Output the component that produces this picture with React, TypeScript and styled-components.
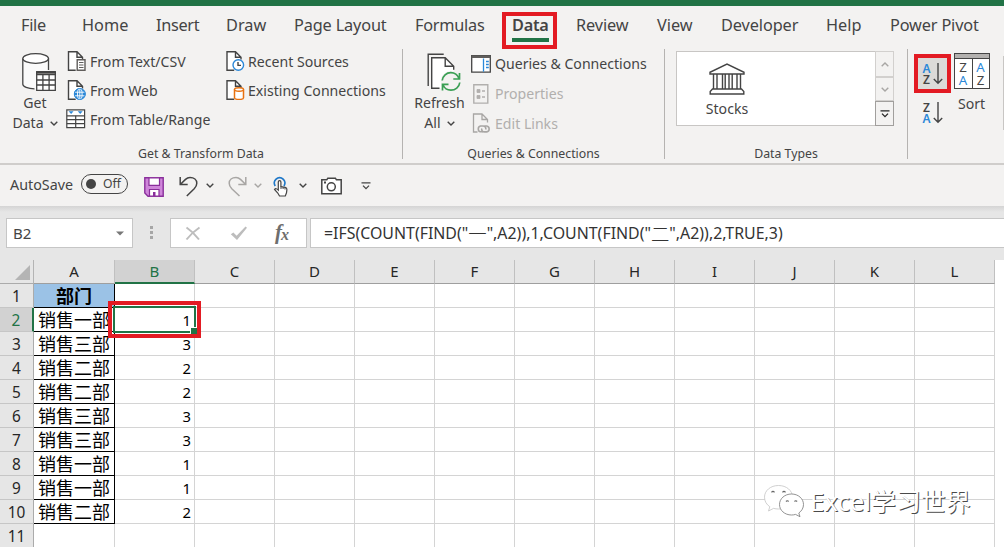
import React from "react";
import styled, { createGlobalStyle, css } from "styled-components";

const UI = `"Noto Sans", "Noto Sans CJK SC", sans-serif`;
const INK = "#444444";
const GREEN = "#217346";
const RED = "#e31b23";
const BLUE = "#2b88d8";

const GlobalStyle = createGlobalStyle`
  * { box-sizing: border-box; }
  body { margin: 0; background: #fff; overflow: hidden; font-family: ${UI}; color: ${INK}; }
  svg { display: block; flex: none; }
`;

const Window = styled.div`
  position: relative;
  display: flex;
  flex-direction: column;
  width: 1004px;
  height: 547px;
  overflow: hidden;
  background: #fff;
`;

const TitleStrip = styled.div`
  flex: none;
  height: 6px;
  background: ${GREEN};
`;

const TabBar = styled.nav`
  flex: none;
  display: grid;
  grid-template-columns: 61px 74px 70px 68px 121px 97px 64px 81px 64px 105px 64px auto;
  height: 42px;
  padding-left: 21px;
  background: #f3f2f1;
`;

const Tab = styled.div<{ $active?: boolean; $ls?: number }>`
  justify-self: start;
  height: 36px;
  font-size: 16.3px;
  line-height: 38px;
  letter-spacing: ${(p) => p.$ls ?? 0}px;
  white-space: nowrap;
  ${(p) =>
    p.$active &&
    css`
      font-weight: 600;
      border-bottom: 4px solid ${GREEN};
    `}
`;

const Ribbon = styled.div`
  flex: none;
  display: flex;
  height: 117px;
  padding-top: 1px;
  background: #f3f2f1;
  border-bottom: 2px solid #cfcdcb;
`;

const Group = styled.section<{ $w: number }>`
  flex: none;
  display: flex;
  flex-direction: column;
  justify-content: space-between;
  width: ${(p) => p.$w}px;
  height: 110px;
  border-right: 1px solid #b5b3b1;
`;

const GroupBody = styled.div`
  display: flex;
  height: 94px;
`;

const Caption = styled.div`
  height: 14px;
  font-size: 12.3px;
  line-height: 18px;
  text-align: center;
`;

const BigButton = styled.div<{ $w: number; $pt?: number; $pl?: number }>`
  flex: none;
  display: flex;
  flex-direction: column;
  align-items: center;
  width: ${(p) => p.$w}px;
  padding-top: ${(p) => p.$pt ?? 2}px;
  padding-left: ${(p) => p.$pl ?? 0}px;
  font-size: 14.1px;
  line-height: 20px;
  white-space: nowrap;
`;

const BigLine = styled.div`
  display: flex;
  align-items: center;
  gap: 6px;
`;

const Commands = styled.div<{ $w?: number; $row: number; $pb: number }>`
  flex: none;
  display: flex;
  flex-direction: column;
  width: ${(p) => (p.$w ? `${p.$w}px` : "auto")};
  & > div {
    height: ${(p) => p.$row}px;
    padding-bottom: ${(p) => p.$pb}px;
  }
`;

const Command = styled.div<{ $disabled?: boolean }>`
  display: flex;
  align-items: center;
  font-size: 14.1px;
  white-space: nowrap;
  color: ${(p) => (p.$disabled ? "#b1afad" : INK)};
`;

const IconSlot = styled.span<{ $w: number }>`
  display: flex;
  width: ${(p) => p.$w}px;
`;

const Gallery = styled.div`
  display: flex;
  width: 218px;
  height: 75px;
  margin: 2px 0 0 11px;
  background: #fff;
  border: 1px solid #c8c6c4;
`;

const GalleryItem = styled.div`
  display: flex;
  flex-direction: column;
  align-items: center;
  width: 100px;
  padding-top: 11px;
  font-size: 14.1px;
  line-height: 20px;
  gap: 4px;
`;

const GalleryScroll = styled.div`
  display: grid;
  grid-template-rows: 26px 24px 25px;
  width: 19px;
  margin: -1px -1px -1px auto;
`;

const ScrollButton = styled.div<{ $dark?: boolean }>`
  display: flex;
  align-items: center;
  justify-content: center;
  background: #f3f2f1;
  border: 1px solid ${(p) => (p.$dark ? "#a19f9d" : "#d2d0ce")};
`;

const SortColumn = styled.div`
  display: flex;
  flex-direction: column;
  width: 43px;
  padding: 5px 0 0 6px;
`;

const SortButton = styled.div<{ $hot?: boolean }>`
  display: flex;
  align-items: center;
  justify-content: center;
  gap: 1px;
  width: 37px;
  height: 39px;
  padding-right: 1px;
  background: ${(p) => (p.$hot ? "#dcdad8" : "transparent")};
  border: ${(p) => (p.$hot ? `4px solid ${RED}` : "none")};
`;

const RibbonEdge = styled.div`
  width: 1px;
  height: 74px;
  margin: 7px 0 0 auto;
  background: #c8c6c4;
`;

const QuickBar = styled.div`
  flex: none;
  display: flex;
  align-items: center;
  height: 41px;
  padding-left: 10px;
  background: #f3f2f1;
  font-size: 14.3px;
`;

const QuickItem = styled.div<{ $w: number; $dy?: number }>`
  flex: none;
  display: flex;
  align-items: center;
  width: ${(p) => p.$w}px;
  padding-top: ${(p) => Math.max(p.$dy ?? 0, 0)}px;
  padding-bottom: ${(p) => Math.max(-(p.$dy ?? 0), 0)}px;
`;

const Toggle = styled.div`
  display: flex;
  align-items: center;
  justify-content: space-between;
  width: 47px;
  height: 20px;
  padding: 0 6px 0 4px;
  border: 1.3px solid ${INK};
  border-radius: 10px;
  font-size: 12.2px;
  line-height: 16px;
`;

const Knob = styled.span`
  width: 10px;
  height: 10px;
  border-radius: 50%;
  background: ${INK};
`;

const FormulaRow = styled.div`
  flex: none;
  display: flex;
  height: 54px;
  padding: 12px 0 0 6px;
  background: linear-gradient(#d4d4d4 0, #e6e6e6 6px);
`;

const Field = styled.div<{ $w: number; $ml?: number }>`
  flex: none;
  display: flex;
  align-items: center;
  width: ${(p) => p.$w}px;
  height: 30px;
  margin-left: ${(p) => p.$ml ?? 0}px;
  background: #fff;
  border: 1px solid #c6c6c6;
  font-size: 15px;
  line-height: 26px;
  white-space: nowrap;
`;

const NameBox = styled(Field)`
  justify-content: space-between;
  padding: 0 8px 0 6px;
`;

const FormulaButtons = styled(Field)`
  padding-left: 14px;
`;

const Formula = styled(Field)`
  padding-left: 13px;
  font-size: 15.9px;
  color: #333;
`;

const Quoted = styled.span`
  font-family: "Noto Sans CJK SC", sans-serif;
  font-size: 18.4px;
  font-weight: 300;
  line-height: 26px;
`;

const Grip = styled.div`
  display: flex;
  flex-direction: column;
  gap: 2px;
  width: 3px;
  margin: 8px 0 0 17px;
`;

const Dot = styled.i`
  width: 3px;
  height: 3px;
  background: #a6a6a6;
`;

const Sheet = styled.div`
  flex: none;
  display: grid;
  grid-template-columns: 34px 81px repeat(11, 80px);
  grid-template-rows: 24px;
  grid-auto-rows: 24px;
`;

const Corner = styled.div`
  display: flex;
  align-items: flex-end;
  justify-content: flex-end;
  padding: 0 3px 3px 0;
  background: #e6e6e6;
  border-right: 1px solid #b4b4b4;
  border-bottom: 1px solid #ababab;
`;

const ColumnHead = styled.div<{ $on?: boolean }>`
  font-size: 15px;
  line-height: 23px;
  text-align: center;
  color: ${(p) => (p.$on ? GREEN : "#262626")};
  background: ${(p) => (p.$on ? "#d2d2d2" : "#e6e6e6")};
  border-right: 1px solid #c0c0c0;
  border-bottom: ${(p) => (p.$on ? `2px solid ${GREEN}` : "1px solid #9f9f9f")};
`;

const RowHead = styled.div<{ $on?: boolean }>`
  font-size: 15.4px;
  line-height: 25px;
  text-align: center;
  color: ${(p) => (p.$on ? GREEN : "#262626")};
  background: ${(p) => (p.$on ? "#d2d2d2" : "#e6e6e6")};
  border-right: ${(p) => (p.$on ? `2px solid ${GREEN}` : "1px solid #ababab")};
  border-bottom: 1px solid #c6c6c6;
`;

const Cell = styled.div<{ $kind?: "title" | "dept" | "num" }>`
  background: #fff;
  border-right: 1px solid #d4d4d4;
  border-bottom: 1px solid #d4d4d4;
  color: #000;
  white-space: nowrap;
  ${(p) =>
    (p.$kind === "title" || p.$kind === "dept") &&
    css`
      border-color: #000;
      font-family: "Noto Sans CJK SC", sans-serif;
      font-size: 18px;
      font-weight: 400;
      line-height: 22px;
      text-align: center;
    `}
  ${(p) =>
    p.$kind === "title" &&
    css`
      background: #9bc2e6;
      font-weight: 700;
    `}
  ${(p) =>
    p.$kind === "num" &&
    css`
      padding-right: 3px;
      font-size: 14.8px;
      line-height: 25px;
      text-align: right;
    `}
`;

const Selection = styled.div`
  position: absolute;
  left: 113px;
  top: 306px;
  width: 83px;
  height: 27px;
  border: 2px solid ${GREEN};
  &::after {
    content: "";
    position: absolute;
    right: -3px;
    bottom: -3px;
    width: 6px;
    height: 6px;
    background: ${GREEN};
    border: 1px solid #fff;
    border-width: 1px 0 0 1px;
  }
`;

const Mark = styled.div<{ $x: number; $y: number; $w: number; $h: number }>`
  position: absolute;
  left: ${(p) => p.$x}px;
  top: ${(p) => p.$y}px;
  width: ${(p) => p.$w}px;
  height: ${(p) => p.$h}px;
  border: 4px solid ${RED};
`;

const Watermark = styled.div`
  position: absolute;
  left: 763px;
  top: 480px;
  display: flex;
  align-items: center;
  gap: 5px;
  height: 40px;
  font-size: 25.8px;
  color: #fff;
  text-shadow: 1px 1px 0.5px #4a4a4a;
  white-space: nowrap;
`;

const Hanzi = styled.span`
  font-family: "Noto Sans CJK SC", sans-serif;
  font-size: 24.9px;
`;

const Chevron = ({ color = INK, up = false }: { color?: string; up?: boolean }) => (
  <svg width="8" height="5" viewBox="0 0 8 5" fill="none" stroke={color} strokeWidth="1.4">
    <path d={up ? "M.7 4.3 4 1l3.3 3.3" : "M.7.7 4 4 7.3.7"} />
  </svg>
);

const ChevronBar = ({ color = INK }: { color?: string }) => (
  <svg width="10" height="8" viewBox="0 0 10 8" fill="none" stroke={color} strokeWidth="1.3">
    <path d="M.5.8h9M2 3.600l3 3 3-3" />
  </svg>
);

const DatabaseIcon = () => (
  <svg width="37" height="42" viewBox="0 0 37 42" fill="none" stroke={INK} strokeWidth="1.3">
    <path d="M2.8 7.5v26c0 2.400 5 4.500 12 4.500l1.500-.1V20h12.200V7.500" fill="#fafafa" stroke="none" />
    <path d="M2.800 7.500v25.800c0 2.300 5 4.400 11.700 4.500M28.500 7.500V19" />
    <ellipse cx="15.650" cy="7.500" rx="12.850" ry="4.900" fill="#fff" />
    <path d="M16.700 20.700h18.600v18.600H16.700z" fill="#fff" />
    <path d="M16.700 21.700h18.600v2H16.700z" fill="#8a8886" />
    <path d="M22.900 24v15.500M29.100 24v15.500M16.700 29h18.600M16.700 34h18.600" />
  </svg>
);

const Sheetlet = () => (
  <>
    <path d="M1 .8h8.500l5.500 5.500v12.900H1z" fill="#fff" stroke="none" />
    <path d="M8.200 19.200H1V.8h8.500L15 6.300v2.200M9.500.8v5.500H15" stroke={INK} />
  </>
);

const TextFileIcon = () => (
  <svg width="20" height="20" viewBox="-1.500 0 20 20" fill="none" strokeWidth="1.4">
    <Sheetlet />
    <path d="M9.700 8.700h7.800v10.600H9.700z" fill="#fff" stroke="#605e5c" />
    <path d="M11.500 11.500H16M11.500 14H16M11.500 16.500H16" stroke="#605e5c" strokeWidth="1.100" />
  </svg>
);

const WebFileIcon = () => (
  <svg width="20" height="20" viewBox="-1.500 0 20 20" fill="none" strokeWidth="1.4">
    <Sheetlet />
    <circle cx="12.300" cy="14" r="5.800" fill={BLUE} />
    <g stroke="#fff" strokeWidth=".9">
      <ellipse cx="12.300" cy="14" rx="2.300" ry="5.300" />
      <path d="M7.300 12.200h10M7.300 15.800h10M12.300 8.500v11" />
    </g>
    <circle cx="12.300" cy="14" r="5.500" stroke={BLUE} strokeWidth="1" />
  </svg>
);

const RecentFileIcon = () => (
  <svg width="19" height="20" viewBox="0 0 19 20" fill="none" strokeWidth="1.4">
    <Sheetlet />
    <circle cx="12.300" cy="14" r="5.300" fill="#fff" stroke={BLUE} strokeWidth="1.400" />
    <path d="M12 11v3.400h3" stroke={INK} />
  </svg>
);

const ConnectionFileIcon = () => (
  <svg width="19" height="20" viewBox="0 0 19 20" fill="none" strokeWidth="1.4">
    <Sheetlet />
    <path d="M8.500 9.500v8.200c0 1 2 1.700 4.500 1.700s4.500-.7 4.500-1.700V9.500" fill="#fff" stroke="#e8710f" strokeWidth="1.500" />
    <ellipse cx="13" cy="9.500" rx="4.500" ry="1.700" fill="#fff" stroke="#e8710f" strokeWidth="1.500" />
  </svg>
);

const TableRangeIcon = () => (
  <svg width="20" height="20" viewBox="0 0 20 20" fill="none" stroke={INK} strokeWidth="1.2">
    <path d="M.8.8h17.800v17.800H.8z" fill="#fff" />
    <path d="M2.600 2.300h5L5.100 5.100zM11.700 2.300h5l-2.500 2.800z" fill={BLUE} stroke="none" />
    <path d="M.8 6.800h17.800M.8 10.700h17.800M.8 14.600h17.800" />
    <path d="M9.700 6.800v11.800" />
  </svg>
);

const RefreshIcon = () => (
  <svg width="36" height="40" viewBox="0 0 36 40" fill="none" stroke={INK} strokeWidth="1.4">
    <path d="M5.700 4.800h13.500l8.500 8.500v22H5.700z" fill="#fff" stroke="none" />
    <path d="M2.200 33V1.200h15.500M13.500 35.300H5.700V4.800h13.500l8.500 8.500v3.500M19.200 4.800v8.500h8.500" />
    <circle cx="25" cy="28.500" r="10.500" fill="#f3f2f1" stroke="none" />
    <g stroke="#3a9f54" strokeWidth="1.700">
      <path d="M16.200 27.500c.6-4.700 4.300-7.800 8.600-7.800 3.600 0 6.700 2 8.300 6M33.500 20v6h-6.200" />
      <path d="M33.800 29.500c-.6 4.700-4.500 7.700-8.900 7.700-3.500 0-6.500-1.900-8.100-5.700M16.500 37.500v-6.200h6" />
    </g>
  </svg>
);

const QueriesIcon = () => (
  <svg width="20" height="18" viewBox="0 0 20 18" fill="none" stroke={INK} strokeWidth="1.300">
    <path d="M.7.7h18.600v16.500H.7z" fill="#fff" />
    <path d="M.7 1.700h18.600" strokeWidth="2.600" stroke="#605e5c" />
    <path d="M12.500 3.500v13.200" stroke={BLUE} />
    <path d="M15 6.500h2.800M15 9.500h2.800M15 12.500h2.800" stroke={BLUE} strokeWidth="1.700" />
  </svg>
);

const PropertiesIcon = () => (
  <svg width="18" height="20" viewBox="-2 0 18 20" fill="none" stroke="#b1afad" strokeWidth="1.400">
    <path d="M.8.8h14v18.300H.8z" />
    <path d="M4 5.500h3v3H4zM4 11.500h3v3H4z" fill="#b1afad" strokeWidth=".8" />
    <path d="M9 7h3M9 13h3" />
  </svg>
);

const LinksIcon = () => (
  <svg width="20" height="21" viewBox="-1.500 0 20 21" fill="none" stroke="#a8a6a4" strokeWidth="1.300">
    <path d="M5 19H1V1h8.500L15 6.500v3M9.500 1v5.500H15" />
    <path d="M10.500 18.800H8a3 3 0 0 1 0-5.800h2.500c2 0 3.300 1.600 2.700 3.500" strokeWidth="1.600" />
    <path d="M12 13h2.200a3 3 0 0 1 0 5.900H12c-2 0-3.200-1.500-2.700-3.400" strokeWidth="1.600" />
  </svg>
);

const BankIcon = () => (
  <svg width="36" height="32" viewBox="0 0 36 32" fill="none" stroke={INK} strokeWidth="1.400">
    <path d="M1 11V9.300L18 1l17 8.300V11zM4.500 11v15M8 11v15M13.500 11v15M16.200 11v15M20 11v15M23.200 11v15M28 11v15M31.500 11v15" />
    <path d="M3.500 26h29l2.300 2.500V31H1.200v-2.500z" />
  </svg>
);

const AZ = styled.span`
  display: flex;
  flex-direction: column;
  width: 10px;
  font-size: 12px;
  font-weight: 600;
  line-height: 11px;
  text-align: center;
`;

const Letter = styled.b<{ $blue?: boolean }>`
  font-weight: inherit;
  color: ${(p) => (p.$blue ? BLUE : INK)};
`;

const ArrowDown = () => (
  <svg width="10" height="22" viewBox="0 0 10 22" fill="none" stroke={INK} strokeWidth="1.400">
    <path d="M5 0v20M.8 16 5 20.300 9.200 16" />
  </svg>
);

const SortGlyph = ({ first, second }: { first: string; second: string }) => (
  <>
    <AZ>
      <Letter $blue={first === "A"}>{first}</Letter>
      <Letter $blue={second === "A"}>{second}</Letter>
    </AZ>
    <ArrowDown />
  </>
);

const SortBox = styled.div`
  display: grid;
  grid-template-columns: 1fr 1fr;
  grid-template-rows: 5px 1fr;
  width: 36px;
  height: 36px;
  margin-bottom: 5px;
  background: #fff;
  border: 1px solid ${INK};
`;

const SortHeader = styled.div`
  grid-column: 1 / -1;
  background: #b3b1af;
  border-bottom: 1px solid ${INK};
`;

const SortPane = styled.div`
  display: flex;
  flex-direction: column;
  align-items: center;
  font-size: 13.300px;
  line-height: 12.500px;
  padding-top: 2px;
  & + & {
    border-left: 1px solid ${INK};
  }
`;

const SaveIcon = () => (
  <svg width="20" height="20" viewBox="0 0 20 20">
    <path d="M.8.8h18.400v18.400H4L.8 16z" fill="#cf86da" stroke="#8a2f9b" strokeWidth="1.400" />
    <path d="M5 .8h10.500v7.500H5z" fill="#fff" stroke="#8a2f9b" strokeWidth="1.200" />
    <path d="M5.500 12.500h9.500v6.700H5.500z" fill="#fff" stroke="#8a2f9b" strokeWidth="1.200" />
    <path d="M9 15h2.500v4.200H9z" fill="#8a2f9b" />
  </svg>
);

const UndoIcon = () => (
  <svg width="19" height="21" viewBox="0 0 19 21" fill="none" stroke={INK} strokeWidth="1.500">
    <path d="M1.200 1v7.500h7.500M1.500 8.300 6.500 3.400C8 2 9.500 1.500 11 1.500c4 0 6.800 2.400 6.800 5.800 0 2.300-1.100 3.900-2.600 5.500L7.800 20" />
  </svg>
);

const RedoIcon = () => (
  <svg width="19" height="21" viewBox="0 0 19 21" fill="none" stroke="#a8a6a4" strokeWidth="1.500">
    <path d="M17.800 1v7.500h-7.500M17.500 8.300l-5-4.900C11 2 9.500 1.500 8 1.500 4 1.500 1.200 3.900 1.200 7.300c0 2.300 1.100 3.900 2.600 5.500L11.500 20" />
  </svg>
);

const TouchIcon = () => (
  <svg width="15" height="21" viewBox="0 0 15 21" fill="none">
    <path d="M2.200 10A5.300 5.300 0 1 1 11 10" stroke="#1f78c8" strokeWidth="1.800" />
    <path
      d="M5.300 13.500V6a1.300 1.300 0 0 1 2.600 0v4.500l4.300.9c1.200.3 1.800 1 1.700 2.200l-.4 3.200-1.200 3.200H6.500L4.800 17l-3.300-3.500c.9-1.300 2.200-.9 3.800.6z"
      fill="#fff"
      stroke={INK}
      strokeWidth="1.200"
    />
    <path d="M8 10.500V13M10.100 11v2M12 11.500v2" stroke={INK} />
  </svg>
);

const CameraIcon = () => (
  <svg width="21" height="18" viewBox="0 0 21 18" fill="none" stroke={INK} strokeWidth="1.500">
    <path d="M.8 2.800h5l1-1.600h7.600l1 1.600h4.800v14H.8z" fill="#fff" />
    <circle cx="10.300" cy="9.800" r="4" />
    <path d="M3 5.500h2" strokeWidth="1.800" />
  </svg>
);

const DropIcon = () => (
  <svg width="8" height="5" viewBox="0 0 8 5">
    <path d="M0 .5h8l-4 4z" fill="#777" />
  </svg>
);

const CancelIcon = () => (
  <svg width="16" height="15" viewBox="0 0 16 15" fill="none" stroke="#bdbdbd" strokeWidth="2">
    <path d="M1.500 1.500c4.500 3 9 7.500 12.500 12M14.500 1.500C10 4.500 5 9 1.500 13.500" />
  </svg>
);

const AcceptIcon = () => (
  <svg width="18" height="15" viewBox="0 0 18 15">
    <path d="m.8 8.300 2.600-1.800 3.200 3.300L15.500.6l1.500 1.200L7 14z" fill="#bdbdbd" />
  </svg>
);

const Fx = styled.span`
  margin-left: 27px;
  padding-bottom: 3px;
  font: italic 700 21px/24px "Liberation Serif", serif;
  letter-spacing: -1px;
  color: #6e6e6e;
  & sub {
    font-size: 16px;
    line-height: 0;
    vertical-align: -1px;
  }
`;

const WeChatIcon = () => (
  <svg width="42" height="38" viewBox="0 0 42 38" fill="#fff" stroke="#a8a8a8" strokeWidth=".8">
    <path d="M15.500 4.500C7.500 4.500 1.500 9.600 1.500 16.200c0 4 2 7.300 5.300 9.500L5.500 30l5-2.600c1.600.4 3.300.6 5 .6 8 0 14-5.200 14-11.800S23.500 4.500 15.500 4.500z" stroke="#c4c4c4" />
    <path d="M28.500 13c-6.800 0-12 4.700-12 10.500s5.200 10.500 12 10.500c1.500 0 2.800-.2 4-.6l4.500 2.300-1.200-3.700c2.900-2 4.700-5 4.700-8.500C40.500 17.700 35.300 13 28.500 13z" stroke="#777" />
    <path d="M8.500 11.300q1.500-1.800 3 0M19.500 11.300q1.500-1.800 3 0M23 20.500q1.300-1.500 2.600 0M31.500 20.500q1.300-1.500 2.600 0" fill="none" stroke="#666" strokeWidth="1.200" />
  </svg>
);

const tabs: { name: string; ls?: number }[] = [
  { name: "File", ls: -0.3 },
  { name: "Home" },
  { name: "Insert", ls: -0.3 },
  { name: "Draw" },
  { name: "Page Layout", ls: -0.15 },
  { name: "Formulas", ls: -0.25 },
  { name: "Data", ls: -0.25 },
  { name: "Review", ls: -0.1 },
  { name: "View" },
  { name: "Developer", ls: -0.1 },
  { name: "Help" },
  { name: "Power Pivot", ls: -0.15 },
];

const columns = "ABCDEFGHIJKL".split("");

const rows: [string, string][] = [
  ["部门", ""],
  ["销售一部", "1"],
  ["销售三部", "3"],
  ["销售二部", "2"],
  ["销售二部", "2"],
  ["销售三部", "3"],
  ["销售三部", "3"],
  ["销售一部", "1"],
  ["销售一部", "1"],
  ["销售二部", "2"],
  ["", ""],
];

const kindOf = (row: number, col: number): "title" | "dept" | "num" | undefined => {
  if (col === 0 && row === 0) return "title";
  if (col === 0 && row < 10) return "dept";
  if (col === 1) return "num";
  return undefined;
};

export default function App() {
  return (
    <Window>
      <GlobalStyle />
      <TitleStrip />
      <TabBar>
        {tabs.map((t) => (
          <Tab key={t.name} $active={t.name === "Data"} $ls={t.ls}>
            {t.name}
          </Tab>
        ))}
      </TabBar>

      <Ribbon>
        <Group $w={403}>
          <GroupBody>
            <BigButton $w={66} $pl={4}>
              <IconSlot $w={31}><DatabaseIcon /></IconSlot>
              <BigLine>Get</BigLine>
              <BigLine>Data <Chevron /></BigLine>
            </BigButton>
            <Commands $w={160} $row={29} $pb={5}>
              <Command><IconSlot $w={24}><TextFileIcon /></IconSlot>From Text/CSV</Command>
              <Command><IconSlot $w={24}><WebFileIcon /></IconSlot>From Web</Command>
              <Command><IconSlot $w={24}><TableRangeIcon /></IconSlot>From Table/Range</Command>
            </Commands>
            <Commands $row={29} $pb={5}>
              <Command><IconSlot $w={22}><RecentFileIcon /></IconSlot>Recent Sources</Command>
              <Command><IconSlot $w={22}><ConnectionFileIcon /></IconSlot>Existing Connections</Command>
            </Commands>
          </GroupBody>
          <Caption>Get &amp; Transform Data</Caption>
        </Group>

        <Group $w={262}>
          <GroupBody>
            <BigButton $w={68} $pt={4} $pl={5}>
              <IconSlot $w={28}><RefreshIcon /></IconSlot>
              <BigLine>Refresh</BigLine>
              <BigLine>All <Chevron /></BigLine>
            </BigButton>
            <Commands $row={30} $pb={1}>
              <Command><IconSlot $w={24}><QueriesIcon /></IconSlot>Queries &amp; Connections</Command>
              <Command $disabled><IconSlot $w={24}><PropertiesIcon /></IconSlot>Properties</Command>
              <Command $disabled><IconSlot $w={24}><LinksIcon /></IconSlot>Edit Links</Command>
            </Commands>
          </GroupBody>
          <Caption>Queries &amp; Connections</Caption>
        </Group>

        <Group $w={243}>
          <GroupBody>
            <Gallery>
              <GalleryItem><BankIcon />Stocks</GalleryItem>
              <GalleryScroll>
                <ScrollButton><Chevron up color="#a8a6a4" /></ScrollButton>
                <ScrollButton><Chevron color="#a8a6a4" /></ScrollButton>
                <ScrollButton $dark><ChevronBar color="#222" /></ScrollButton>
              </GalleryScroll>
            </Gallery>
          </GroupBody>
          <Caption>Data Types</Caption>
        </Group>

        <SortColumn>
          <SortButton $hot><SortGlyph first="A" second="Z" /></SortButton>
          <SortButton><SortGlyph first="Z" second="A" /></SortButton>
        </SortColumn>
        <BigButton $w={41} $pt={4}>
          <SortBox>
            <SortHeader />
            <SortPane><Letter>Z</Letter><Letter $blue>A</Letter></SortPane>
            <SortPane><Letter $blue>A</Letter><Letter>Z</Letter></SortPane>
          </SortBox>
          Sort
        </BigButton>
        <RibbonEdge />
      </Ribbon>

      <QuickBar>
        <QuickItem $w={71} $dy={-2}>AutoSave</QuickItem>
        <QuickItem $w={63} $dy={-3}><Toggle><Knob />Off</Toggle></QuickItem>
        <QuickItem $w={35} $dy={2}><SaveIcon /></QuickItem>
        <QuickItem $w={27} $dy={2}><UndoIcon /></QuickItem>
        <QuickItem $w={22}><Chevron /></QuickItem>
        <QuickItem $w={26} $dy={2}><RedoIcon /></QuickItem>
        <QuickItem $w={19}><Chevron color="#a8a6a4" /></QuickItem>
        <QuickItem $w={26} $dy={1}><TouchIcon /></QuickItem>
        <QuickItem $w={22}><Chevron /></QuickItem>
        <QuickItem $w={40}><CameraIcon /></QuickItem>
        <QuickItem $w={20}><ChevronBar /></QuickItem>
      </QuickBar>

      <FormulaRow>
        <NameBox $w={127}>B2<DropIcon /></NameBox>
        <Grip><Dot /><Dot /><Dot /></Grip>
        <FormulaButtons $w={137} $ml={17}>
          <IconSlot $w={45}><CancelIcon /></IconSlot>
          <AcceptIcon />
          <Fx>f<sub>x</sub></Fx>
        </FormulaButtons>
        <Formula $w={700} $ml={3}>
          =IFS(COUNT(FIND("<Quoted>一</Quoted>",A2)),1,COUNT(FIND("<Quoted>二</Quoted>",A2)),2,TRUE,3)
        </Formula>
      </FormulaRow>

      <Sheet>
        <Corner>
          <svg width="15" height="15" viewBox="0 0 15 15"><path d="M15 0v15H0z" fill="#b4b4b4" /></svg>
        </Corner>
        {columns.map((c) => (
          <ColumnHead key={c} $on={c === "B"}>{c}</ColumnHead>
        ))}
        {rows.map((row, r) => (
          <React.Fragment key={r}>
            <RowHead $on={r === 1}>{r + 1}</RowHead>
            {columns.map((c, i) => (
              <Cell key={c} $kind={kindOf(r, i)}>{row[i] ?? ""}</Cell>
            ))}
          </React.Fragment>
        ))}
      </Sheet>

      <Selection />
      <Mark $x={502} $y={12} $w={55} $h={37} />
      <Mark $x={108} $y={301} $w={93} $h={37} />
      <Watermark>
        <WeChatIcon />
        <span>Excel<Hanzi>学习世界</Hanzi></span>
      </Watermark>
    </Window>
  );
}
